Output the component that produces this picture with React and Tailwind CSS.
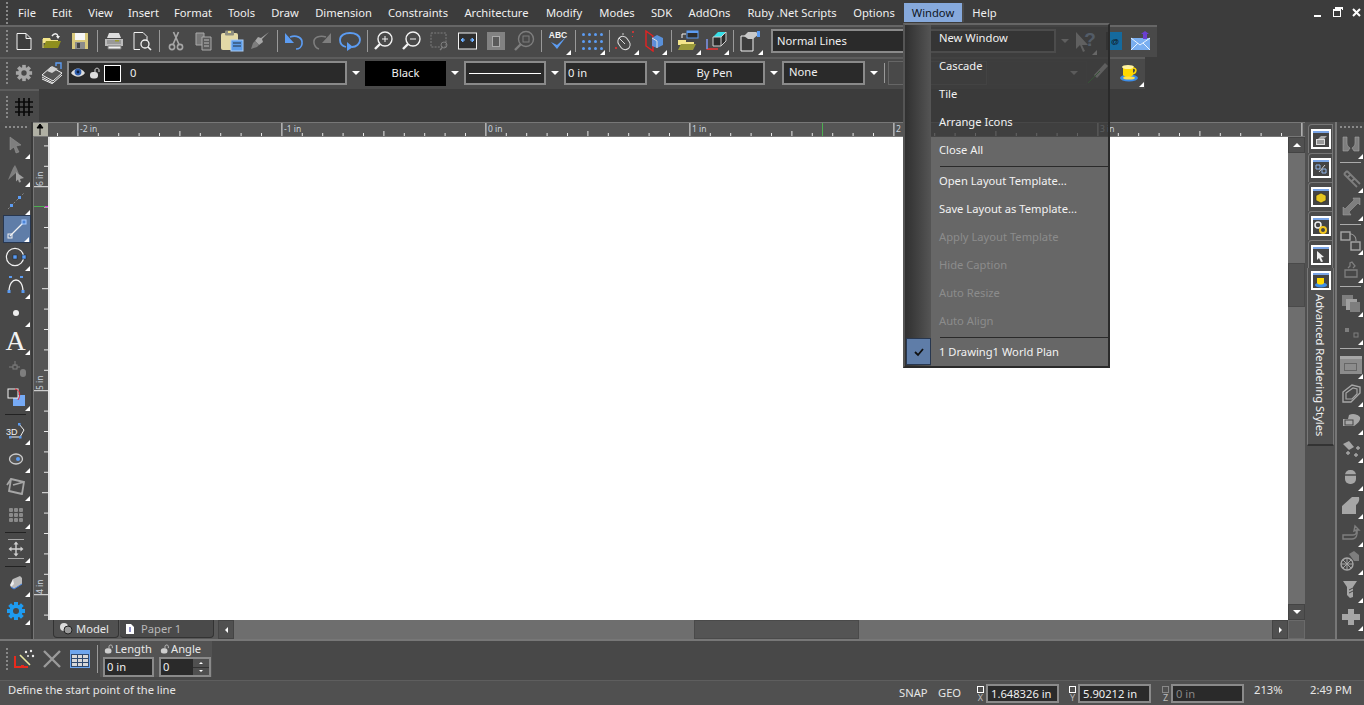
import React from "react";

const S = ({ children, w = 20, h = 20 }) => (
  <svg viewBox={`0 0 ${w} ${h}`} width={w} height={h} className="block shrink-0">{children}</svg>
);
const G = "#a6a6a6";
const D = "#7e7e7e";
const B = "#5c9cf2";
const W = "#f2f2f2";

const Tri = () => <span className="absolute right-[1px] bottom-[0px] w-0 h-0 border-l-[5px] border-l-transparent border-b-[5px] border-b-white" />;
const Grip = () => (
  <div className="w-[10px] h-full shrink-0 flex flex-col items-center justify-center gap-[2px] pl-[4px]">
    {[0, 1, 2, 3, 4, 5].map((i) => <span key={i} className="w-[2px] h-[2px] bg-[#888]" />)}
  </div>
);
const Btn = ({ children, tri }) => (
  <div className="relative w-[28px] h-full shrink-0 flex items-center justify-center">{children}{tri && <Tri />}</div>
);
const Sep = () => <div className="w-[6px] h-full shrink-0 flex items-center justify-center"><span className="w-[1px] h-[22px] bg-[#999]" /></div>;
const Arrow = ({ dim, narrow }) => <div className={narrow ? "w-[17px] h-full shrink-0 flex items-center justify-center" : "w-[18px] h-full shrink-0 flex items-center justify-center"}><span className={dim ? "w-0 h-0 border-x-[4px] border-x-transparent border-t-[4px] border-t-[#ddd]" : "w-0 h-0 border-x-[4px] border-x-transparent border-t-[4px] border-t-white"} /></div>;

const New = () => <S><path d="M3 2.500h9l5 5v11H3z M12 2.500v5h5" fill="#3c3c3c" stroke={W} strokeWidth="1" /></S>;
const Open = () => <S><path d="M1 7h7l1 2h7v3H1z" fill="#f3e58a" /><path d="M1 17l3-7h15l-3 7z" fill="#8f8f1e" /><path d="M1 8v9" stroke="#f3e58a" /><path d="M10 5c2-3 5-3 6 0" fill="none" stroke={W} strokeWidth="1.4" /><path d="M14 5h4l-2 3z" fill={W} /></S>;
const Save = () => <S><rect x="2" y="2" width="16" height="16" fill="#d9c97c" /><rect x="5" y="2" width="10" height="7" fill="#f6f6f6" /><rect x="5" y="11" width="10" height="7" fill="#8c8c8c" /><rect x="7" y="12" width="3" height="5" fill="#444" /></S>;
const Print = () => <S><path d="M5 2h10l2 5H3z" fill="#ddd" /><path d="M1 8h18v7H1z" fill="#bbb" /><path d="M3 10h14M3 12h14" stroke="#777" /><path d="M4 15h13v3H4z" fill="#eee" stroke="#777" /><rect x="11" y="9" width="4" height="1.500" fill="#9c9c30" /></S>;
const Preview = () => <S><path d="M2 1.500h9l4 4v4M8 18.500H2v-17" fill="none" stroke={W} /><circle cx="13" cy="13" r="4" fill="none" stroke={W} strokeWidth="1.3" /><path d="M16 16l3 3" stroke={W} strokeWidth="1.6" /></S>;
const Cut = () => <S><circle cx="6" cy="16" r="2.600" fill="none" stroke={G} strokeWidth="1.6" /><circle cx="14" cy="16" r="2.600" fill="none" stroke={G} strokeWidth="1.6" /><path d="M7 13.500L12.500 1M13 13.500L7.500 1" stroke={G} strokeWidth="1.7" /></S>;
const Copy = () => <S><path d="M2 2h8v12H2z" fill="#777" stroke="#aaa" /><path d="M8 6h9v13H8z" fill="#5b5b5b" stroke="#aaa" /><path d="M10 9h5M10 12h5M10 15h5" stroke="#bbb" /></S>;
const Paste = () => <S w={24} h={22}><rect x="1" y="3" width="17" height="17" rx="2" fill="#e3d9a6" /><rect x="5" y="0.500" width="9" height="5" rx="1" fill="#8f8f80" /><rect x="8" y="1" width="3" height="2" fill="#f1e28a" /><rect x="11" y="10" width="12" height="11" fill="#5d9ce8" stroke="#a9ccf5" /><path d="M13 13h8M13 16h8" stroke="#234" /></S>;
const Brush = () => <S><path d="M19 1l-8 6-3-1-3 4 4 4 4-3-1-3z" fill={G} /><path d="M5 10l4 4-2 2-6 2 2-6z" fill={D} /></S>;
const Undo = () => <S><path d="M1 3v10h9z" fill={B} transform="translate(0 -1)" /><path d="M6 6c6-2 13 0 12 7-.4 3-3 5-6 5" fill="none" stroke={B} strokeWidth="1.7" /></S>;
const Redo = () => <S><path d="M19 2v10h-9z" fill={D} /><path d="M14 6C8 4 1 6 2 12c.4 3 2 5 5 6" fill="none" stroke={D} strokeWidth="1.6" /></S>;
const Loop = () => <S w={22} h={22}><path d="M7 17C3 16 1 13 1 10c0-5 5-7 10-7s10 2 10 7c0 4-4 7-8 7" fill="none" stroke={B} strokeWidth="1.8" /><path d="M8 12l6 5-6 4z" fill={B} /></S>;
const ZoomG = ({ sign, c = W }) => <S w={22} h={22}><circle cx="12" cy="9" r="7" fill="none" stroke={c} strokeWidth="1.4" /><path d="M7 14l-5 5" stroke={c} strokeWidth="2.4" />{sign && <path d="M9 9h6" stroke={c} />}{sign === "+" && <path d="M12 6v6" stroke={c} />}</S>;
const ZoomWin = () => <S w={22} h={22}><rect x="2" y="3" width="15" height="14" fill="none" stroke={D} strokeDasharray="2 1.2" /><circle cx="15" cy="15" r="3" fill="none" stroke={D} /><path d="M13 18l-2 2" stroke={D} strokeWidth="1.4" /></S>;
const ZoomExt = () => <S w={22} h={20}><rect x="1.500" y="2" width="18" height="16" fill="#2e2e2e" stroke={W} /><path d="M4 9h4M4 9l2-2v4zM17 9h-4M17 9l-2-2v4z" stroke="#6eb0ff" fill="#6eb0ff" /></S>;
const ZoomPage = () => <div className="w-[18px] h-[18px] bg-[#828282] flex items-center justify-center"><div className="w-[8px] h-[11px] bg-[#5a5a5a] border border-[#aaa]" /></div>;
const ZoomPan = () => <S w={22} h={22}><circle cx="13" cy="9" r="7.500" fill="none" stroke={D} strokeWidth="1.4" /><rect x="10" y="6" width="6" height="6" fill="none" stroke={D} /><path d="M8 14l-6 6" stroke={D} strokeWidth="2.4" /></S>;
const Abc = () => <S w={20} h={22}><text x="10" y="8" textAnchor="middle" fontSize="8.500" fontWeight="700" fill={W} fontFamily="Liberation Sans">ABC</text><path d="M3 12l6 7 9-12-9 8z" fill={B} /></S>;
const Dots = () => <div className="grid grid-cols-4 gap-x-[3px] gap-y-[4px]">{Array.from({ length: 12 }).map((_, i) => <span key={i} className="w-[3px] h-[3px] rounded-full bg-[#5c9cf2]" />)}</div>;
const Mouse = () => <S w={24} h={22}><rect x="5" y="6" width="10" height="14" rx="5" transform="rotate(-35 10 13)" fill="none" stroke="#ddd" /><path d="M5 8l6 6" stroke="#ddd" /><circle cx="2" cy="18" r="1" fill="#e33" /><circle cx="19" cy="2" r="1" fill="#e33" /><path d="M18 6l1 1" stroke="#e33" /><circle cx="9" cy="4" r=".8" fill="#ddd" /></S>;
const Planes = () => <S w={22} h={22}><path d="M3 1l7 5v15l-7-5z" fill="none" stroke="#e52222" strokeWidth="1.4" /><path d="M9 8l5-3 6 3v7l-6 3-5-2z" fill={B} opacity=".85" /><path d="M9 8l5 3v7" stroke="#ddd" fill="none" /></S>;
const Folder2 = () => <S w={22} h={22}><path d="M1 10h8v2h8v3H1z" fill="#f3e58a" /><path d="M1 20l3-6h15l-3 6z" fill="#9a9a3a" /><rect x="10" y="1" width="11" height="7" fill="#2d2d2d" stroke={B} /><rect x="10" y="1" width="11" height="2" fill={B} /><path d="M5 8V4h4" stroke={W} fill="none" /></S>;
const Cube = () => <S w={24} h={22}><path d="M9 7l5-5h8l-5 5z" fill="#36dfe8" /><path d="M9 7h8v9H9zM17 7l5-5v9l-5 5" fill="#2c2c2c" stroke="#cfcfcf" /><path d="M3 9v10h11" stroke="#e33" fill="none" strokeWidth="1.3" /><path d="M3 9v10" stroke={B} strokeWidth="1.5" /></S>;
const PageHand = () => <S w={22} h={22}><path d="M2 6h12v15H2z" fill="#3c3c3c" stroke={W} /><path d="M5 6l4-4h8l3 2-6 5H9z" fill="#c9c9c9" /><rect x="18" y="1" width="3" height="6" fill={B} /></S>;
const Help = () => <S w={24} h={24}><path d="M2 3v17l4-4 3 7 2-1-3-6h6z" fill="#e0e0e0" /><text x="16" y="17" textAnchor="middle" fontSize="19" fontWeight="700" fill="#a8d0ff" fontFamily="Liberation Sans">?</text></S>;
const Book = () => <S w={18} h={20}><rect x="3" y="1" width="14" height="18" fill="#156a9e" /><rect x="1" y="1" width="3" height="18" fill="#222" /><text x="10" y="13" textAnchor="middle" fontSize="8" fill="#111" fontFamily="Liberation Sans">@</text></S>;
const Mail = () => <S w={22} h={20}><path d="M1 7h19v12H1z" fill="#79aef0" /><path d="M1 7l9 7 10-7M1 19l7-7M20 19l-7-7" stroke="#e8f2ff" fill="none" /><path d="M13 8V3h-2l4-3 4 3h-2v5z" fill="#6a3fd0" /></S>;
const Gear = ({ c = G, s = 18 }) => <svg viewBox="0 0 20 20" width={s} height={s} className="block shrink-0"><g fill={c}>{[0, 45, 90, 135].map((a) => <rect key={a} x="8" y="1" width="4" height="18" transform={`rotate(${a} 10 10)`} />)}<circle cx="10" cy="10" r="6.600" /></g><circle cx="10" cy="10" r="3" fill="#484848" /></svg>;
const Layers = () => <S w={22} h={22}><path d="M1 13l9-8 11 6-9 8z" fill="#555" stroke={W} /><path d="M1 15l11 6 9-8M1 17l11 5" fill="none" stroke={W} /><path d="M6 9l5-5 6 3-6 4z" fill="#cfcfcf" /><path d="M15 4V1h5v6" stroke={B} fill="none" strokeWidth="1.4" /></S>;
const Eye = () => <S w={16} h={12}><path d="M1 6c4-6 10-6 14 0-4 5-10 5-14 0z" fill="#ddd" /><circle cx="8" cy="5" r="3.400" fill="#2f5fb0" /><circle cx="8" cy="5" r="1.400" fill="#0d1d3a" /></S>;
const Lock = ({ c = "#ddd", s = 12 }) => <svg viewBox="0 0 12 12" width={s} height={s} className="block shrink-0"><path d="M6 5V3c0-2.400 4-2.400 4 0v2" fill="none" stroke={c} /><rect x="1" y="5" width="8" height="6.500" rx="3" fill={c} /></svg>;
const Pencil = () => <S w={22} h={24}><path d="M7 14L18 2l3 3L10 17z" fill="#ddd" /><path d="M1 22l12-12" stroke="#2fae2f" /></S>;
const Cup = () => <S w={20} h={18}><ellipse cx="10" cy="14" rx="9" ry="3.500" fill="#3d8de8" /><path d="M4 3h10v8c-2 3-8 3-10 0z" fill="#ffd900" /><ellipse cx="9" cy="3" rx="6" ry="2" fill="#fff3a0" /><path d="M14 4c4 0 4 5-1 6" fill="none" stroke="#ffd900" strokeWidth="1.6" /><ellipse cx="10" cy="14" rx="6" ry="1.600" fill="#ffe24a" /></S>;
const Grid = () => <S w={20} h={20}><path d="M5 1v18M10 1v18M15 1v18M1 5h18M1 10h18M1 15h18" stroke="#0a0a0a" strokeWidth="1.7" /></S>;

const menus = [
  ["File", "w-[34px]"], ["Edit", "w-[36px]"], ["View", "w-[41px]"], ["Insert", "w-[45px]"], ["Format", "w-[54px]"], ["Tools", "w-[43px]"], ["Draw", "w-[44px]"],
  ["Dimension", "w-[73px]"], ["Constraints", "w-[76px]"], ["Architecture", "w-[81px]"], ["Modify", "w-[54px]"], ["Modes", "w-[52px]"], ["SDK", "w-[37px]"], ["AddOns", "w-[59px]"], ["Ruby .Net Scripts", "w-[106px]"], ["Options", "w-[58px]"],
];
const MenuBar = () => (
  <div className="h-[25px] flex items-stretch bg-[#3c3c3c] shrink-0">
    <Grip />
    {menus.map(([t, w]) => <div key={t} className={`${w} shrink-0 flex items-center justify-center text-[#f0f0f0]`}>{t}</div>)}
    <div className="w-[58px] h-[19px] mt-[3px] ml-[1px] flex items-center justify-center bg-[#86a9dc] text-[#10151c]">Window</div>
    <div className="w-[2px] h-[19px] mt-[3px] bg-[#4a4a4a]" />
    <div className="w-[41px] flex items-center justify-center text-[#f0f0f0]">Help</div>
    <div className="ml-auto w-[50px] pr-[3px] flex items-center justify-between">
      <span className="w-[7px] h-[2px] mt-[6px] bg-white" />
      <span className="relative w-[8px] h-[8px] border border-white border-t-2"><span className="absolute -top-[4px] left-[1px] w-[8px] h-[3px] border-t-2 border-r border-white" /></span>
      <svg viewBox="0 0 9 9" width="9" height="9"><path d="M1 1l7 7M8 1L1 8" stroke="#fff" strokeWidth="2" /></svg>
    </div>
  </div>
);

const Combo = ({ className, children }) => <div className={`h-[24px] shrink-0 bg-[#2a2a2a] border-2 border-[#8a8a8a] flex items-center ${className}`}>{children}</div>;

const Row1 = () => (
  <div className="h-[32px] w-[1157px] flex items-center bg-[#494949] border-t-2 border-[#666] pb-[2px] shrink-0">
    <Grip />
    <Btn><New /></Btn><Btn><Open /></Btn><Btn><Save /></Btn><Sep />
    <Btn><Print /></Btn><Btn><Preview /></Btn><Sep />
    <Btn><Cut /></Btn><Btn><Copy /></Btn><Btn><Paste /></Btn><Btn><Brush /></Btn><Sep />
    <Btn><Undo /></Btn><Btn><Redo /></Btn><Btn><Loop /></Btn><Sep />
    <Btn><ZoomG sign="+" /></Btn><Btn><ZoomG sign="-" /></Btn><Btn><ZoomWin /></Btn><Btn><ZoomExt /></Btn><Btn><ZoomPage /></Btn><Btn><ZoomPan /></Btn><Sep />
    <Btn tri><Abc /></Btn><Sep />
    <Btn tri><Dots /></Btn><Sep />
    <Btn tri><Mouse /></Btn><Btn tri><Planes /></Btn><Sep />
    <Btn tri><Folder2 /></Btn><Btn tri><Cube /></Btn><Sep />
    <Btn tri><PageHand /></Btn>
    <div className="w-[7px] shrink-0" />
    <Combo className="w-[285px] pl-[4px] text-[#f0f0f0]">Normal Lines</Combo>
    <Arrow dim />
    <div className="relative w-[24px] h-full shrink-0 flex items-center justify-center"><Help /><Tri /></div>
    <div className="w-[32px] h-full shrink-0 flex items-center justify-center"><Book /></div>
    <div className="w-[22px] h-full shrink-0 flex items-center justify-center"><Mail /></div>
  </div>
);

const Row2 = () => (
  <div className="h-[32px] w-[1145px] flex items-center bg-[#494949] border-t-2 border-[#5c5c5c] pb-[2px] shrink-0">
    <Grip />
    <Btn><Gear /></Btn><Btn><Layers /></Btn>
    <Combo className="w-[280px] ml-[1px] pl-[1px] gap-[3px]">
      <Eye /><Lock /><span className="w-[17px] h-[17px] bg-black border border-white shrink-0" /><span className="ml-[6px] text-[#eee]">0</span>
    </Combo>
    <Arrow />
    <div className="w-[81px] h-[25px] shrink-0 bg-black flex items-center justify-center text-[#f0f0f0]">Black</div>
    <Arrow />
    <Combo className="w-[82px] px-[3px]"><span className="w-full h-[1px] bg-white" /></Combo>
    <Arrow />
    <Combo className="w-[83px] pl-[2px] text-[#f0f0f0]">0 in</Combo>
    <Arrow narrow />
    <Combo className="w-[101px] justify-center text-[#f0f0f0]">By Pen</Combo>
    <Arrow narrow />
    <Combo className="w-[83px] pl-[5px] pb-[3px] text-[#f0f0f0]">None</Combo>
    <Arrow narrow />
    <span className="w-[1px] h-[20px] ml-[2px] bg-[#999] shrink-0" />
    <div className="w-[99px] h-[24px] ml-[3px] shrink-0 border border-[#666]" />
    <div className="w-[99px] h-[24px] ml-[1px] shrink-0 border border-[#4e4e4e] pl-[2px] py-[3px] flex items-stretch gap-[3px]">
      <div className="w-[76px] bg-[#4a4a4a]" />
      <div className="flex items-center"><span className="w-0 h-0 border-x-[4px] border-x-transparent border-t-[4px] border-t-[#ccc]" /></div>
    </div>
    <div className="w-[22px] h-full shrink-0 flex items-center justify-center"><Pencil /></div>
    <div className="relative w-[36px] h-full shrink-0 pl-[4px] flex items-center justify-center"><Cup /><Tri /></div>
  </div>
);

const Row3 = () => (
  <div className="h-[33px] bg-[#3c3c3c] shrink-0">
    <div className="h-full w-[39px] flex items-center bg-[#494949] border-t-2 border-[#5c5c5c]">
      <Grip />
      <Btn><Grid /></Btn>
    </div>
  </div>
);

const HGrip = () => <div className="h-[9px] w-full flex items-center justify-center gap-[2px] shrink-0">{[0, 1, 2, 3, 4, 5].map((i) => <span key={i} className="w-[2px] h-[2px] bg-[#8a8a8a]" />)}</div>;
const VBtn = ({ children, tri = true }) => (
  <div className="relative h-[28px] w-full shrink-0 flex items-center justify-center">
    {children}{tri && <Tri />}
  </div>
);
const VSep = () => <div className="h-[6px] w-full shrink-0 flex items-center justify-center"><span className="w-[21px] h-[1px] bg-[#222]" /></div>;
const RSep = () => <div className="h-[6px] w-full shrink-0 flex items-center justify-center"><span className="w-[21px] h-[1px] bg-[#aaa]" /></div>;

const Pointer = () => <S w={16} h={18}><path d="M2 1l11 8-5 1 3 6-3 1-2-6-4 3z" fill={D} stroke="#9a9a9a" strokeWidth=".5" /></S>;
const NodeP = () => <S w={20} h={20}><path d="M2 17C5 10 6 6 9 2l2 4 2 5-3-1z" fill={D} /><path d="M10 9l8 6-4 1 1 3-2 .6-1-3-2 2z" fill="#a0a0a0" /></S>;
const DotLine = () => <S w={20} h={20}><path d="M2 18l16-16" stroke="#888" strokeDasharray="2 2" /><rect x="4" y="13" width="3" height="3" fill={B} /><rect x="12" y="5" width="3" height="3" fill={B} /></S>;
const LineI = () => <S w={22} h={22}><path d="M4 18L18 4" stroke={W} strokeWidth="1.2" /><rect x="2" y="16" width="4" height="4" fill="none" stroke={W} /><rect x="16" y="2" width="4" height="4" fill="#4c85d8" stroke="#a8ccff" /></S>;
const CircleI = () => <S w={22} h={22}><circle cx="10" cy="11" r="8.600" fill="none" stroke={W} strokeWidth="1.2" /><rect x="8" y="9" width="4" height="4" fill={B} stroke="#123" strokeWidth=".5" /><rect x="17" y="9" width="4" height="4" fill={B} stroke="#123" strokeWidth=".5" /></S>;
const ArcI = () => <S w={20} h={20}><path d="M3 17C3 8 7 5 10 5s7 3 7 12" fill="none" stroke={W} strokeWidth="1.3" /><rect x="1.500" y="15" width="3" height="3" fill={B} /><rect x="15.500" y="15" width="3" height="3" fill={B} /><path d="M3 2h3M14 2h3" stroke={B} strokeWidth="2" /></S>;
const Point = () => <span className="w-[6px] h-[6px] rounded-full bg-[#eee]" />;
const Snap = () => <S w={20} h={18}><path d="M9 1v5M3 7h4M11 7h3" stroke={D} /><rect x="7" y="5" width="4" height="4" fill="none" stroke={D} /><rect x="14" y="9" width="6" height="8" rx="3" fill={D} /></S>;
const Shape = () => <S w={20} h={20}><rect x="7" y="8" width="12" height="11" fill="#76aaf5" /><rect x="2" y="2" width="10" height="9" fill="#3c3c3c" stroke={W} /><path d="M9 2c5 1 6 6 3 11" fill="none" stroke="#e23" /></S>;
const ThreeD = () => <S w={20} h={20}><text x="0" y="14" fontSize="9" fill={W} fontFamily="Liberation Sans">3D</text><path d="M13 3l5 6-4 7H4" fill="none" stroke={W} /><rect x="12" y="2" width="2.500" height="2.500" fill={B} /><rect x="13" y="15" width="2.500" height="2.500" fill={B} /><rect x="3" y="15" width="2.500" height="2.500" fill={B} /></S>;
const EyeBall = () => <S w={16} h={16}><ellipse cx="8" cy="8" rx="6.500" ry="5" fill="#555" stroke="#ccc" strokeWidth="1.3" /><circle cx="10" cy="8" r="2" fill={B} /></S>;
const Box3 = () => <S w={20} h={20}><path d="M5 2l13 3-2 12-13-3z M1 8l4-6M3 14l13 3M7 8l11-3" fill="none" stroke={G} strokeWidth="1.8" /></S>;
const GreyDots = () => <div className="grid grid-cols-3 gap-[1px]">{Array.from({ length: 9 }).map((_, i) => <span key={i} className="w-[4px] h-[4px] rounded-[1px] bg-[#8a8a8a]" />)}</div>;
const Move = () => <S w={22} h={22}><path d="M3 1.500h16M3 20.500h16" stroke={G} /><path d="M11 5v12M5 11h12" stroke="#cfcfcf" strokeWidth="1.4" /><path d="M11 3.500l-2.500 3h5zM11 18.500l-2.500-3h5zM3.500 11l3-2.500v5zM18.500 11l-3-2.500v5z" fill="#cfcfcf" /></S>;
const Eraser = () => <S w={16} h={16}><path d="M5 4l7-3 2 2v6l-8 5-3-2z" fill="#bbb" /><path d="M2 10l3-6 1 5 -3 3z" fill="#eee" /><path d="M3 12l3 2 8-5" stroke="#3f7fe0" fill="none" /></S>;

const LeftBar = () => (
  <div className="w-[33px] h-full shrink-0 bg-[#484848] border-r-2 border-[#3a3a3a] flex flex-col">
    <HGrip />
    <VBtn><Pointer /></VBtn>
    <VBtn><NodeP /></VBtn>
    <VBtn><DotLine /></VBtn>
    <div className="relative h-[28px] w-[28px] shrink-0 ml-[3px] -mr-[3px] bg-[#5f7da8] border border-[#28374f] flex items-center justify-center"><LineI /><Tri /></div>
    <VBtn><CircleI /></VBtn>
    <VBtn><ArcI /></VBtn>
    <VBtn><Point /></VBtn>
    <VBtn><span className="font-['Liberation_Serif',serif] text-[28px] leading-none text-[#f2f2f2]">A</span></VBtn>
    <VBtn tri={false}><Snap /></VBtn>
    <VBtn><Shape /></VBtn>
    <VSep />
    <VBtn><ThreeD /></VBtn>
    <VBtn><EyeBall /></VBtn>
    <VBtn><Box3 /></VBtn>
    <VBtn><GreyDots /></VBtn>
    <VSep />
    <VBtn><Move /></VBtn>
    <VSep />
    <VBtn><Eraser /></VBtn>
    <VBtn><Gear c="#1e9bf0" s={20} /></VBtn>
  </div>
);

const RI = ({ children }) => <VBtn>{children}</VBtn>;
const Ug = ({ d, w = 20, h = 20 }) => <S w={w} h={h}><path d={d} fill={G} /></S>;
const RightBar = () => (
  <div className="w-[29px] h-full shrink-0 bg-[#484848] border-l-2 border-[#777] flex flex-col">
    <HGrip />
    <RI><S><path d="M2 2v14h5l2-3c-2-1-3-3-3-5V2zM18 2v14h-5l-2-3c2-1 3-3 3-5V2z" fill={D} stroke={G} strokeWidth=".6" /></S></RI>
    <RSep />
    <RI><S><path d="M3 5l13 13M6 2l13 13M3 5l3-3M6 9l3-3M10 13l3-3" stroke={D} strokeWidth="1.8" /></S></RI>
    <RI><S><path d="M12 1h7v7l-2-2-9 9 2 3H2v-8l2 2 9-9z" fill={D} stroke={G} strokeWidth=".5" /></S></RI>
    <RSep />
    <RI><S w={22} h={22}><rect x="1" y="2" width="9" height="8" fill="none" stroke={G} strokeWidth="1.4" /><rect x="11" y="12" width="9" height="8" fill="none" stroke={G} strokeWidth="1.4" /><path d="M10 4c4 0 6 3 6 7" fill="none" stroke={G} /></S></RI>
    <RI><S><path d="M4 11h12v7H4zM7 9l2-2v-3l2 -1 3 4-2 2" fill="none" stroke={D} strokeWidth="1.3" /></S></RI>
    <RSep />
    <RI><S><rect x="1" y="2" width="11" height="11" fill={D} /><rect x="5" y="6" width="11" height="11" fill="#a0a0a0" /><rect x="9" y="9" width="10" height="10" fill={D} /></S></RI>
    <RI><S w={18} h={18}><rect x="3" y="6" width="4" height="4" fill={D} /><rect x="12" y="11" width="4" height="4" fill="none" stroke={D} /></S></RI>
    <RSep />
    <RI><div className="w-[22px] h-[18px] bg-[#8c8c8c] border-t-[3px] border-[#a6a6a6] flex items-center justify-center"><div className="w-[13px] h-[8px] border border-[#666]" /></div></RI>
    <RI><S w={22} h={22}><path d="M3 10l9-7 8 2v6l-9 9H3z" fill="none" stroke={G} strokeWidth="1.4" /><path d="M6 11l7-5 4 1v5l-5 5H6z" fill="none" stroke={G} strokeWidth="1.2" /></S></RI>
    <RI><S><path d="M8 4a8 6 0 0 1 11 2c1 4-3 7-6 9H2V8h5z" fill={G} /><rect x="4" y="9" width="8" height="5" fill="none" stroke="#444" /></S></RI>
    <RI><S><path d="M2 5l6-3 5 6-5 3z" fill={G} /><path d="M5 14h4M7 12v4M13 16h4M15 14v4M15 9h4M17 7v4" stroke={G} strokeWidth="1.4" /></S></RI>
    <RI><S w={16} h={16}><rect x="2" y="1" width="11" height="14" rx="5" fill={G} /><path d="M2 6h11" stroke="#444" strokeWidth="1.4" /></S></RI>
    <RI><Ug d="M1 19V11L11 2h7c1 5-2 7-3 8v9z" /></RI>
    <RI><S><path d="M2 12h10c3 0 4-2 3-5l-2 1 1-5 4 4-2 0c1 5-1 9-5 9H2z" fill="none" stroke={D} strokeWidth="1.4" /></S></RI>
    <RI><S w={22} h={22}><circle cx="7" cy="14" r="6" fill="none" stroke={G} strokeWidth="1.4" /><path d="M7 8v12M1 14h12M3 10l8 8M11 10l-8 8" stroke={G} /><path d="M9 4l5-3 5 4v6h-5z" fill={D} /></S></RI>
    <RI><S><path d="M2 2h14l-4 6v10l-3 1-3-3V8z" fill={G} /><path d="M8 11l4-2M8 14l4-2" stroke="#444" /></S></RI>
    <RI><Ug d="M7 2h6v5h6v6h-6v5H7v-5H1V7h6z" /></RI>
  </div>
);

const TabIcon = ({ children }) => (
  <div className="w-[20px] h-[20px] border-2 border-white bg-[#444] flex flex-col">
    <div className="h-[2px] bg-[#7aa5e6] shrink-0" />
    <div className="flex-1 flex items-center justify-center">{children}</div>
  </div>
);
const Tab = ({ children }) => (
  <div className="h-[29px] w-[25px] ml-[3px] shrink-0 border-l border-t border-r border-[#777] rounded-tl-[4px] bg-[#4b4b4b] flex items-center justify-center">
    <TabIcon>{children}</TabIcon>
  </div>
);
const SidePanel = () => (
  <div className="w-[30px] h-full shrink-0 bg-[#505050] flex flex-col pt-[2px]">
    <Tab><S w={14} h={12}><path d="M2 5h9v6H2z" fill="#ddd" /><path d="M4 5l3-3h6l-3 3z" fill="#aaa" /><path d="M3 7h7M3 9h7" stroke="#555" /></S></Tab>
    <Tab><S w={14} h={12}><path d="M2 2h4v4H2zM8 6h4v4H8z" fill="none" stroke="#8fb4e8" /><path d="M5 9l6-7" stroke="#ccc" /></S></Tab>
    <Tab><S w={12} h={12}><path d="M6 1l5 2.500v5L6 11 1 8.500v-5z" fill="#e6c51f" stroke="#222" strokeWidth=".6" /></S></Tab>
    <Tab><S w={15} h={13}><circle cx="5" cy="4" r="3" fill="none" stroke="#eee" strokeWidth="1.5" /><circle cx="10" cy="9" r="3" fill="none" stroke="#f2c61f" strokeWidth="2" /></S></Tab>
    <Tab><S w={10} h={12}><path d="M1 1l7 6-3 .5 2 4-2 .5-2-4-2 2z" fill="#eee" /></S></Tab>
    <div className="w-[27px] h-[178px] ml-[2px] -mt-[1px] shrink-0 bg-[#515151] border-l border-r border-b-2 border-[#777] border-b-[#333] flex flex-col items-center pt-[3px]">
      <div className="w-[20px] h-[19px] border-2 border-white bg-[#444] flex flex-col shrink-0">
        <div className="h-[2px] bg-[#7aa5e6] shrink-0" />
        <div className="flex-1 flex items-center justify-center"><S w={14} h={12}><ellipse cx="7" cy="9" rx="6" ry="2.500" fill="#3d8de8" /><path d="M3 2h7v5c-1 2-6 2-7 0z" fill="#ffd900" /></S></div>
      </div>
      <div className="[writing-mode:vertical-rl] mt-[4px] text-[#f0f0f0] whitespace-nowrap">Advanced Rendering Styles</div>
    </div>
  </div>
);

const TopRuler = () => {
  const xs = [];
  for (let i = -3; i < 66; i++) xs.push(i);
  return (
    <div className="h-[15px] flex shrink-0 bg-[#555] border-y border-[#777]">
      <div className="w-[15px] h-full shrink-0 bg-[#b0b0a4] flex items-center justify-center"><S w={10} h={13}><path d="M4 12V3M1 5l3-4 3 4z" stroke="#000" fill="#000" /></S></div>
      <svg width="1257" height="13" className="block">
        {xs.map((i) => {
          const x = 29.9 + i * 20.4;
          const k = ((i % 10) + 10) % 10;
          const y = k === 0 ? 0 : k === 5 ? 8 : 10;
          return <line key={i} x1={x} x2={x} y1={y} y2={13} stroke="#e8e8e8" />;
        })}
        {[["-2 in", 30], ["-1 in", 234], ["0 in", 438], ["1 in", 642], ["2 in", 846], ["3 in", 1050]].map(([t, x]) => (
          <text key={t} x={x + 2} y="9" fontSize="8.5" fill="#c9d2dc" fontFamily="Noto Sans">{t}</text>
        ))}
        <line x1="774.5" x2="774.5" y1="0" y2="13" stroke="#4caf50" />
      </svg>
    </div>
  );
};
const SideRuler = () => {
  const ys = [];
  for (let i = 0; i < 25; i++) ys.push(i);
  return (
    <div className="w-[15px] h-full shrink-0 bg-[#555] border-l border-[#777]">
      <svg width="14" height="483" className="block">
        {ys.map((i) => {
          const y = 8.9 + i * 20.4;
          const k = (i - 2 + 100) % 10;
          const x = k === 0 ? 0 : k === 5 ? 8 : 10;
          return <line key={i} x1={x} x2={14} y1={y} y2={y} stroke="#e8e8e8" />;
        })}
        {[["6 in", 49], ["5 in", 253], ["4 in", 457]].map(([t, y]) => (
          <text key={t} transform={`translate(9 ${y}) rotate(-90)`} fontSize="8.5" fill="#c9d2dc" fontFamily="Noto Sans">{t}</text>
        ))}
        <line x1="0" x2="11" y1="69.5" y2="69.5" stroke="#4caf50" />
        <line x1="11" x2="14" y1="69.5" y2="69.5" stroke="#e22ee2" />
      </svg>
    </div>
  );
};
const Sq = ({ dir, className }) => (
  <div className={`bg-[#505050] border border-[#444] flex items-center justify-center shrink-0 ${className}`}>
    {dir === "u" && <span className="w-0 h-0 border-x-[4px] border-x-transparent border-b-[4px] border-b-white" />}
    {dir === "d" && <span className="w-0 h-0 border-x-[4px] border-x-transparent border-t-[4px] border-t-white" />}
    {dir === "l" && <span className="w-0 h-0 border-y-[3px] border-y-transparent border-r-[3px] border-r-white" />}
    {dir === "r" && <span className="w-0 h-0 border-y-[3px] border-y-transparent border-l-[3px] border-l-white" />}
  </div>
);
const Center = () => (
  <div className="w-[1272px] h-full shrink-0 flex flex-col">
    <TopRuler />
    <div className="h-[483px] flex shrink-0">
      <SideRuler />
      <div className="w-[1240px] h-full shrink-0 bg-white border-l-2 border-[#e8e8e8]" />
      <div className="w-[17px] h-full shrink-0 bg-[#6e6e6e] flex flex-col">
        <Sq dir="u" className="w-[17px] h-[16px]" />
        <div className="flex-1 pt-[110px]"><div className="h-[44px] bg-[#545454] border border-[#4a4a4a]" /></div>
        <Sq dir="d" className="w-[17px] h-[16px]" />
      </div>
    </div>
    <div className="flex-1 flex">
      <div className="w-[20px] shrink-0 bg-[#555] border-l border-[#777]" />
      <div className="w-[165px] shrink-0 bg-[#595959] flex items-start">
        <div className="w-[66px] h-[18px] flex items-center gap-[3px] pl-[5px] bg-[#505050] border-x border-b border-[#333] rounded-b-[4px] text-[#e8e8e8]">
          <S w={14} h={13}><circle cx="5" cy="5" r="4" fill="#ddd" /><circle cx="9" cy="8" r="4" fill="#999" stroke="#222" /></S>Model
        </div>
        <div className="w-[94px] ml-[1px] h-[18px] flex items-center gap-[6px] pl-[5px] bg-[#4a4a4a] border-r border-b border-[#333] rounded-b-[4px] text-[#b8b8b8]">
          <S w={10} h={12}><path d="M1 1h5l3 3v7H1z" fill="#fff" /><path d="M5 4v5" stroke="#228" /></S>Paper 1
        </div>
      </div>
      <Sq dir="l" className="w-[16px] h-full" />
      <div className="flex-1 bg-[#6e6e6e] flex"><div className="w-[460px] shrink-0" /><div className="w-[165px] h-full bg-[#545454] border border-[#4a4a4a] shrink-0" /></div>
      <Sq dir="r" className="w-[16px] h-full" />
      <div className="w-[17px] shrink-0 bg-[#5c5c5c] border border-[#6a6a6a]" />
    </div>
  </div>
);

const Options = () => (
  <div className="h-[41px] flex items-start bg-[#484848] border-t-2 border-[#777] shrink-0">
    <div className="h-[36px] flex items-stretch shrink-0">
      <Grip />
      <Btn><S w={24} h={24}><path d="M8 8l10 10" stroke="#e8e8a0" strokeWidth="1.6" /><circle cx="14" cy="5" r="1.2" fill="#eee" /><circle cx="19" cy="4" r="1.2" fill="#eee" /><circle cx="21" cy="9" r="1.2" fill="#eee" /><circle cx="16" cy="9" r="1" fill="#eee" /><path d="M3 9v11h13" fill="none" stroke="#e82a1c" strokeWidth="2" /><rect x="9" y="18" width="3" height="3" fill="#e82a1c" /></S></Btn>
      <Btn><S w={20} h={20}><path d="M2 2l16 16M18 2L2 18" stroke="#9a9a9a" strokeWidth="2.4" /></S></Btn>
      <Btn>
        <div className="w-[20px] h-[18px] border border-[#6ea6ee] bg-[#2f4a70] flex flex-col">
          <div className="h-[3px] bg-[#6ea6ee] shrink-0" />
          <div className="flex-1 grid grid-cols-3 gap-[1px] p-[1px]">{Array.from({ length: 9 }).map((_, i) => <span key={i} className="bg-[#d8d8d8]" />)}</div>
        </div>
      </Btn>
      <div className="w-[4px] h-full shrink-0 flex items-center justify-center ml-[1px]"><span className="w-[1px] h-[28px] bg-[#999]" /></div>
    </div>
    <div className="w-[112px] ml-[1px] h-[36px] shrink-0 bg-[#535353] flex gap-[5px] pl-[3px]">
      <div className="w-[51px] shrink-0">
        <div className="h-[16px] flex items-center gap-[1px] pl-[1px] text-[#e8e8e8]"><Lock c="#cfcfcf" s={10} />Length</div>
        <div className="h-[20px] bg-[#2a2a2a] border-2 border-[#8a8a8a] pl-[2px] leading-[16px] text-[#f0f0f0]">0 in</div>
      </div>
      <div className="w-[52px] shrink-0">
        <div className="h-[16px] flex items-center gap-[1px] pl-[1px] text-[#e8e8e8]"><Lock c="#cfcfcf" s={10} />Angle</div>
        <div className="h-[20px] bg-[#2a2a2a] border-2 border-[#8a8a8a] pl-[2px] leading-[16px] text-[#f0f0f0] flex">
          <span className="flex-1">0</span>
          <div className="w-[16px] bg-[#505050] flex flex-col">
            <div className="flex-1 flex items-center justify-center border-b border-[#333]"><span className="w-0 h-0 border-x-[2px] border-x-transparent border-b-[2px] border-b-white" /></div>
            <div className="flex-1 flex items-center justify-center"><span className="w-0 h-0 border-x-[2px] border-x-transparent border-t-[2px] border-t-white" /></div>
          </div>
        </div>
      </div>
    </div>
  </div>
);

const Coord = ({ label, value, dim, className }) => (
  <div className={`flex items-center shrink-0 ${className}`}>
    <div className="w-[11px] h-full flex flex-col items-center">
      <span className={dim ? "w-[7px] h-[7px] mt-[3px] border border-[#888]" : "w-[7px] h-[7px] mt-[3px] border border-white"} />
      <span className="text-[9px] leading-[10px] text-[#bbb]">{label}</span>
    </div>
    <div className={dim ? "w-[73px] h-[19px] bg-[#2a2a2a] border-2 border-[#8a8a8a] pl-[3px] leading-[15px] text-[#888]" : "w-[73px] h-[19px] bg-[#2a2a2a] border-2 border-[#8a8a8a] pl-[3px] leading-[15px] text-[#f0f0f0]"}>{value}</div>
  </div>
);
const Status = () => (
  <div className="h-[25px] flex items-center bg-[#505050] border-t border-[#5e5e5e] shrink-0 text-[#e6e6e6]">
    <div className="w-[899px] pl-[8px] -mt-[6px] shrink-0">Define the start point of the line</div>
    <div className="w-[39px] shrink-0">SNAP</div>
    <div className="w-[37px] shrink-0">GEO</div>
    <Coord label="X" value="1.648326 in" className="h-[20px]" />
    <Coord label="Y" value="5.90212 in" className="h-[20px] ml-[8px]" />
    <Coord label="Z" value="0 in" dim className="h-[20px] ml-[9px]" />
    <div className="w-[37px] ml-[10px] -mt-[6px] shrink-0">213%</div>
    <div className="ml-[19px] -mt-[6px] shrink-0">2:49 PM</div>
  </div>
);

const Item = ({ children, dim }) => (
  <div className={dim ? "h-[28px] flex items-center pl-[34px] pb-[2px] text-[#8c8c8c]" : "h-[28px] flex items-center pl-[34px] pb-[2px] text-[#f2f2f2]"}>{children}</div>
);
const MSep = () => <div className="h-[3px] pl-[35px] pt-[1px]"><div className="h-[1px] bg-[#2a2a2a]" /></div>;
const WindowMenu = () => (
  <div className="absolute left-[903px] top-[23px] w-[207px] h-[345px] bg-[rgba(57,57,57,0.77)] border-2 border-t-[#666] border-x-[#2a2a2a] border-b-[#2a2a2a] border-l-[#555]">
    <div className="absolute left-0 top-0 bottom-0 w-[26px] bg-gradient-to-r from-[#303030] to-[#555]" />
    <div className="relative">
      <Item>New Window</Item><Item>Cascade</Item><Item>Tile</Item><Item>Arrange Icons</Item><Item>Close All</Item>
      <MSep />
      <Item>Open Layout Template...</Item><Item>Save Layout as Template...</Item>
      <Item dim>Apply Layout Template</Item><Item dim>Hide Caption</Item><Item dim>Auto Resize</Item><Item dim>Auto Align</Item>
      <MSep />
      <Item>1 Drawing1 World Plan</Item>
    </div>
    <div className="absolute left-[1px] bottom-[1px] w-[25px] h-[27px] bg-[#5f7da8] border border-[#28374f] flex items-center justify-center">
      <svg viewBox="0 0 10 10" width="10" height="10"><path d="M1 5l3 3 5-6" fill="none" stroke="#111" strokeWidth="1.8" /></svg>
    </div>
  </div>
);

export default function App() {
  return (
    <div className="relative w-[1364px] h-[705px] overflow-hidden flex flex-col bg-[#3c3c3c] font-['Noto_Sans',sans-serif] text-[11.2px] leading-none">
      <MenuBar />
      <Row1 />
      <Row2 />
      <Row3 />
      <div className="h-[517px] flex shrink-0">
        <LeftBar />
        <Center />
        <SidePanel />
        <RightBar />
      </div>
      <Options />
      <Status />
      <WindowMenu />
    </div>
  );
}
